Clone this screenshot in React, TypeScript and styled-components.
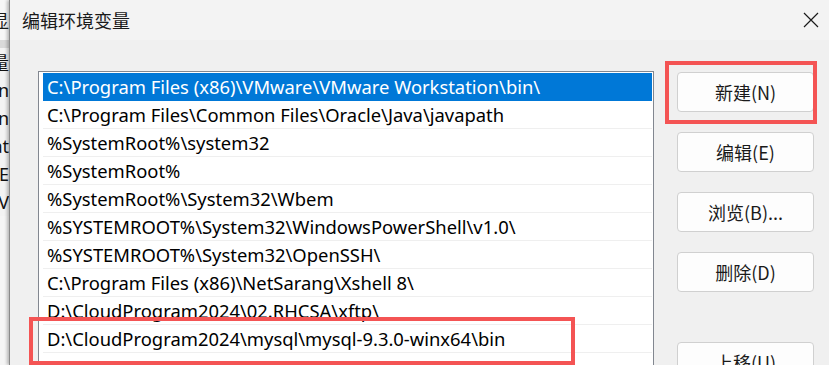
import React from "react";
import styled, { createGlobalStyle } from "styled-components";

const Global = createGlobalStyle`
  html, body { margin: 0; padding: 0; background: #f0f0f0; }
  body { width: 829px; height: 365px; overflow: hidden; }
  * { box-sizing: border-box; }
`;

const LATIN = `"Noto Sans", "Noto Sans CJK SC", sans-serif`;
const CJK = `"Noto Sans CJK SC", "Noto Sans", sans-serif`;

const Page = styled.div`
  position: relative;
  display: flex;
  width: 829px;
  height: 365px;
  overflow: hidden;
  font-family: ${LATIN};
`;

const BackStrip = styled.div`
  width: 9px;
  flex: none;
  display: flex;
  flex-direction: column;
  background: #f3f3f3;
  overflow: hidden;
`;

const BackTop = styled.div`
  height: 40px;
  display: flex;
  justify-content: flex-end;
  align-items: center;
  overflow: hidden;
  white-space: nowrap;
  font-family: ${CJK};
  font-size: 18px;
  color: #1a1a1a;
  background: #f7f7f7;
`;

const BackBand = styled.div`
  height: 8px;
  background: #d9d9d9;
`;

const BackRow = styled.div<{ $cjk?: boolean }>`
  height: 28px;
  display: flex;
  justify-content: flex-end;
  align-items: center;
  overflow: hidden;
  white-space: nowrap;
  font-size: 18px;
  color: #111;
  font-family: ${(p) => (p.$cjk ? CJK : LATIN)};
`;

const BackRest = styled.div`
  flex: 1;
  background: #f5f5f5;
`;

const Dialog = styled.div`
  flex: 1;
  display: flex;
  flex-direction: column;
  border-left: 1px solid #8a8a8a;
  box-shadow: -2px 0 3px rgba(0, 0, 0, 0.25);
  background: #f0f0f0;
`;

const TitleBar = styled.div`
  height: 40px;
  flex: none;
  display: flex;
  align-items: center;
  justify-content: space-between;
  padding: 0 10px 0 12px;
  background: #f3f3f3;
`;

const Title = styled.div`
  font-family: ${CJK};
  font-size: 18px;
  color: #1a1a1a;
`;

const CloseIcon = styled.svg`
  width: 16px;
  height: 16px;
  display: block;
`;

const Body = styled.div`
  flex: 1;
  display: flex;
  align-items: flex-start;
  gap: 23px;
  padding: 31px 0 0 28px;
  background: #f0f0f0;
`;

const ListBox = styled.div`
  width: 616px;
  height: 320px;
  flex: none;
  background: #ffffff;
  border: 1px solid #828790;
  padding: 1px 1px 0 4px;
  overflow: hidden;
`;

const Row = styled.div<{ $selected?: boolean }>`
  height: 28px;
  display: flex;
  align-items: center;
  padding-left: 4px;
  white-space: nowrap;
  font-family: ${LATIN};
  font-size: 18.4px;
  color: ${(p) => (p.$selected ? "#ffffff" : "#000000")};
  background: ${(p) => (p.$selected ? "#0078d7" : "#ffffff")};
  border-bottom: 1px solid ${(p) => (p.$selected ? "#0078d7" : "#efefef")};
`;

const ButtonColumn = styled.div`
  display: flex;
  flex-direction: column;
  gap: 20px;
  padding-top: 1px;
`;

const Button = styled.button<{ $extraTop?: boolean }>`
  width: 137px;
  height: 40px;
  margin-top: ${(p) => (p.$extraTop ? "30px" : "0")};
  display: flex;
  align-items: center;
  justify-content: center;
  background: #fdfdfd;
  border: 1px solid #d0d0d0;
  border-radius: 4px;
  font-family: ${CJK};
  font-size: 18px;
  color: #1a1a1a;
  padding: 0;
`;

const Highlight = styled.div`
  position: absolute;
  border: 4px solid #f45454;
  pointer-events: none;
`;

const paths = [
  "C:\\Program Files (x86)\\VMware\\VMware Workstation\\bin\\",
  "C:\\Program Files\\Common Files\\Oracle\\Java\\javapath",
  "%SystemRoot%\\system32",
  "%SystemRoot%",
  "%SystemRoot%\\System32\\Wbem",
  "%SYSTEMROOT%\\System32\\WindowsPowerShell\\v1.0\\",
  "%SYSTEMROOT%\\System32\\OpenSSH\\",
  "C:\\Program Files (x86)\\NetSarang\\Xshell 8\\",
  "D:\\CloudProgram2024\\02.RHCSA\\xftp\\",
  "D:\\CloudProgram2024\\mysql\\mysql-9.3.0-winx64\\bin",
  "",
];

const buttons = ["新建(N)", "编辑(E)", "浏览(B)...", "删除(D)"];

export default function App() {
  return (
    <>
      <Global />
      <Page>
        <BackStrip>
          <BackTop>显</BackTop>
          <BackBand />
          <BackRow $cjk>变量</BackRow>
          <BackRow>n</BackRow>
          <BackRow>n</BackRow>
          <BackRow>at</BackRow>
          <BackRow>E</BackRow>
          <BackRow>V</BackRow>
          <BackRest />
        </BackStrip>
        <Dialog>
          <TitleBar>
            <Title>编辑环境变量</Title>
            <CloseIcon viewBox="0 0 16 16">
              <path d="M1 1 L15 15 M15 1 L1 15" stroke="#1a1a1a" strokeWidth="1.2" fill="none" />
            </CloseIcon>
          </TitleBar>
          <Body>
            <ListBox>
              {paths.map((p, i) => (
                <Row key={i} $selected={i === 0}>
                  {p}
                </Row>
              ))}
            </ListBox>
            <ButtonColumn>
              {buttons.map((b) => (
                <Button key={b}>{b}</Button>
              ))}
              <Button $extraTop>上移(U)</Button>
            </ButtonColumn>
          </Body>
        </Dialog>
        <Highlight style={{ left: 665, top: 61, width: 152, height: 63 }} />
        <Highlight style={{ left: 29, top: 317, width: 546, height: 48 }} />
      </Page>
    </>
  );
}
